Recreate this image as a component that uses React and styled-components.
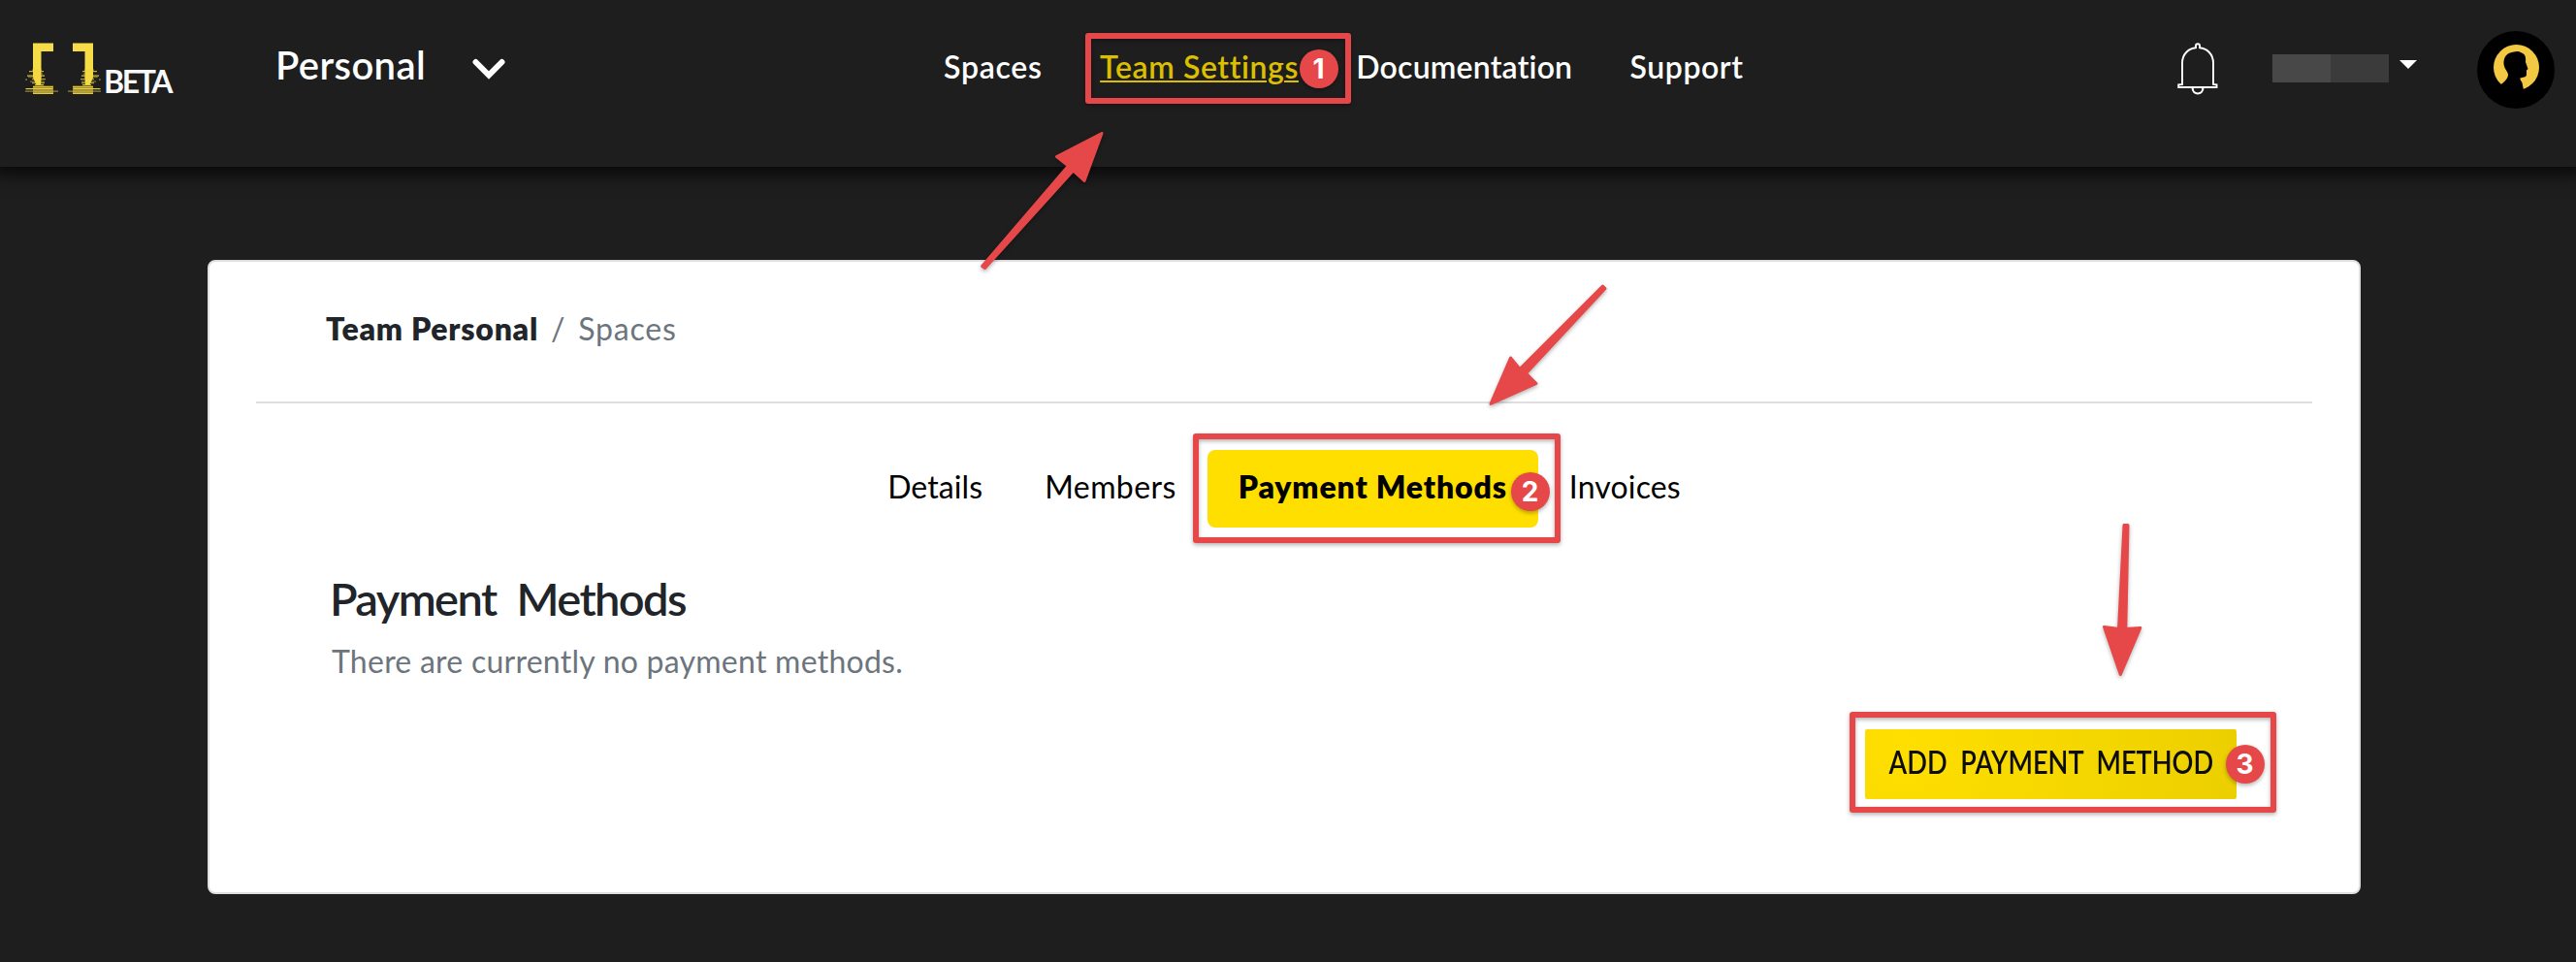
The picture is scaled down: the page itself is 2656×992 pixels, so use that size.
import React from 'react';
import styled, { createGlobalStyle, css } from 'styled-components';

const RED = '#e64849';

const GlobalStyle = createGlobalStyle`
  *, *::before, *::after { box-sizing: border-box; }
  body {
    margin: 0;
    background: #1e1e1e;
    font-family: Lato, "Liberation Sans", sans-serif;
    font-size: 32px;
    line-height: 40px;
    overflow: hidden;
  }
`;

const Page = styled.div`
  position: relative;
  width: 2656px;
  height: 992px;
  background: #1e1e1e;
  overflow: hidden;
`;

const Header = styled.header`
  display: grid;
  grid-template-columns: 284px 689px 1fr auto;
  align-items: start;
  height: 172px;
  padding-right: 22px;
  background: #1e1e1e;
  box-shadow: 0 0 16px 8px rgba(0, 0, 0, 0.7);
`;

const Brand = styled.div`
  display: flex;
  padding: 44px 0 0 24px;
`;

const BrandLabel = styled.span`
  margin: 20px 0 0 -3px;
  color: #f8f9fa;
  font-weight: 700;
  letter-spacing: -2.4px;
`;

const TeamPicker = styled.div`
  display: flex;
  align-items: center;
  gap: 47px;
  padding-top: 43px;
  color: #fff;
  font-size: 40px;
  font-weight: 600;
  line-height: 48px;
  letter-spacing: 0.4px;

  svg { margin-top: 8px; }
`;

const Nav = styled.nav`
  display: flex;
  gap: 59.3px;
  padding-top: 49px;
`;

const NavLink = styled.a`
  position: relative;
  color: ${(p) => (p.$active ? '#dbbf00' : '#fff')};
  font-weight: 600;
  white-space: nowrap;
  letter-spacing: ${(p) => p.$tracking}px;
`;

const Underlined = styled.span`
  text-decoration: underline;
  text-decoration-thickness: 2px;
  text-underline-offset: 2px;
  text-decoration-skip-ink: auto;
`;

const Account = styled.div`
  display: flex;
  align-items: flex-start;
`;

const Bell = styled.svg`
  margin: 44px 56px 0 0;
`;

const HiddenName = styled.div`
  width: 120px;
  height: 29px;
  margin-top: 56px;
  background: linear-gradient(90deg, #484848 50%, #3b3b3b 50%);
`;

const Caret = styled.div`
  margin: 62px 62px 0 11px;
  border: 9px solid transparent;
  border-top-color: #fff;
  border-bottom: 0;
`;

const Avatar = styled.svg`
  margin-top: 32px;
`;

const Card = styled.main`
  width: 2220px;
  height: 654px;
  margin: 96px 0 0 214px;
  padding: 49px 48px 48px;
  background: #fff;
  border: 2px solid #dfdfdf;
  border-radius: 8px;
`;

const Breadcrumb = styled.div`
  display: flex;
  gap: 13px;
  padding-left: 72px;
  color: #6c757d;
  letter-spacing: 0.8px;

  strong {
    color: #212529;
    font-weight: 800;
    letter-spacing: 0.75px;
  }
`;

const Divider = styled.hr`
  height: 2px;
  margin: 55px 0 48px;
  border: 0;
  background: #dfdfdf;
`;

const Tabs = styled.div`
  display: flex;
  justify-content: center;
`;

const Tab = styled.div`
  position: relative;
  height: 80px;
  padding: 18px 32px 22px;
  color: #000;
  border-radius: 8px;
  letter-spacing: ${(p) => p.$tracking}px;
  ${(p) => p.$active && css`
    background: #ffdf00;
    font-weight: 800;
  `}
`;

const Section = styled.section`
  display: flex;
  flex-direction: column;
  padding: 45px 78px 0 76px;
`;

const Title = styled.h2`
  margin: 0 0 17px;
  color: #212529;
  font-size: 47px;
  font-weight: 600;
  line-height: 56px;
  letter-spacing: -1.6px;
  word-spacing: 11px;
`;

const Note = styled.p`
  margin: 0 0 50px 2px;
  color: #6c757d;
  letter-spacing: 0.25px;
`;

const AddButton = styled.button`
  position: relative;
  display: flex;
  justify-content: center;
  align-self: flex-end;
  width: 383px;
  height: 72px;
  padding: 14px 0 0;
  border: 0;
  border-radius: 2px;
  background: radial-gradient(circle at 10% 20%, #ffdf00, #eccf00 100%);
  color: #0d0d0d;
  font: 600 32px/40px Lato, "Liberation Sans", sans-serif;
  white-space: nowrap;
`;

const ButtonLabel = styled.span`
  word-spacing: 8px;
  transform: scaleX(0.85);
`;

const Frame = styled.span`
  position: absolute;
  left: ${(p) => p.$x}px;
  top: ${(p) => p.$y}px;
  width: ${(p) => p.$w}px;
  height: ${(p) => p.$h}px;
  border: 6px solid ${RED};
  border-radius: 3px;
  filter: drop-shadow(0 2px 2px rgba(0, 0, 0, 0.3));
`;

const Badge = styled.span`
  position: absolute;
  left: ${(p) => p.$x}px;
  top: ${(p) => p.$y}px;
  width: 40px;
  height: 40px;
  border-radius: 50%;
  background: ${RED};
  box-shadow: 0 2px 4px rgba(0, 0, 0, 0.3);
  color: #fff;
  font: 700 28px/40px Inter, "Liberation Sans", sans-serif;
  letter-spacing: 0;
  text-align: center;
`;

const Arrows = styled.svg`
  position: absolute;
  inset: 0;
  pointer-events: none;
  filter: drop-shadow(0 2px 2px rgba(0, 0, 0, 0.3));
`;

/* Glitch streaks of the logo: x, y, width, opacity, for the left bracket. */
const STREAKS = [
  [9, 27.5, 10, 0.6], [6, 29, 15, 0.8], [10, 31.5, 10, 0.5], [4, 33.5, 18, 0.9],
  [5, 35, 14, 0.4], [9, 37, 14, 0.7], [7, 39.5, 15, 0.5], [9, 41, 13, 0.7],
  [12, 43, 9, 0.9], [10, 45, 21, 0.8], [2.5, 47, 28, 0.95], [2, 49.5, 34, 0.6],
  [10, 51.7, 21, 0.95],
];

function LogoHalf() {
  return (
    <g>
      <path d="M10 0.5H31V9H18.5V38L18 43.5H13.5L10 36Z" fill="#f6dc47" />
      <rect x="10" y="44.5" width="21" height="8.5" fill="#f0d43e" opacity="0.55" />
      {STREAKS.map(([x, y, w, o]) => (
        <rect key={y} x={x} y={y} width={w} height="1.2" fill="#f0d63c" opacity={o} />
      ))}
      <rect x="2.5" y="37.5" width="1.2" height="1.2" fill="#e8cf35" />
    </g>
  );
}

function Logo() {
  return (
    <svg width="86" height="54" viewBox="0 0 86 54">
      <LogoHalf />
      <g transform="translate(82 0) scale(-1 1)"><LogoHalf /></g>
    </svg>
  );
}

export default function App() {
  return (
    <>
      <GlobalStyle />
      <Page>
        <Header>
          <Brand>
            <Logo />
            <BrandLabel>BETA</BrandLabel>
          </Brand>
          <TeamPicker>
            Personal
            <svg width="36" height="24" viewBox="0 0 36 24">
              <path d="M4.5 5L18 18.5L31.5 5" fill="none" stroke="#fff" strokeWidth="6" strokeLinecap="round" />
            </svg>
          </TeamPicker>
          <Nav>
            <NavLink $tracking={0.75}>Spaces</NavLink>
            <NavLink $active $tracking={0.6}>
              <Underlined>Team Settings</Underlined>
              <Frame $x={-15} $y={-15} $w={274} $h={73} />
              <Badge $x={205.5} $y={1.5}>1</Badge>
            </NavLink>
            <NavLink $tracking={0.2}>Documentation</NavLink>
            <NavLink $tracking={0.55}>Support</NavLink>
          </Nav>
          <Account>
            <Bell width="42" height="54" viewBox="0 0 42 54">
              <g fill="none" stroke="#fff" strokeWidth="1.9">
                <path d="M5 43V21C5 11.5 12 5.7 19 5.2V3C19 0.6 23 0.6 23 3V5.2C30 5.7 37 11.5 37 21V43L40.5 43.3V46H1.2V43.3Z" />
                <path d="M15.6 46.5C15.6 54.5 26.4 54.5 26.4 46.5" strokeWidth="2.2" />
              </g>
            </Bell>
            <HiddenName />
            <Caret />
            <Avatar width="80" height="80" viewBox="0 0 80 80">
              <circle cx="40" cy="40" r="40" />
              <circle cx="40.5" cy="37.5" r="23.5" fill="#f3c843" />
              <path d="M22 57C28 53 32 49 32 45C32 42 28 39 27.5 34C27 27 31 22 38 21.5C41 20.3 44 21 46 22.5C50 24 50.5 28 50 32L52.5 39L51 40.5L51 45C50.5 48 47 47.5 44.5 48.5C44 51 47 52 47 56L48 61L54 68L40 72L20 66Z" />
            </Avatar>
          </Account>
        </Header>
        <Card>
          <Breadcrumb>
            <strong>Team Personal</strong>
            <span>/</span>
            <span>Spaces</span>
          </Breadcrumb>
          <Divider />
          <Tabs>
            <Tab $tracking={0.1}>Details</Tab>
            <Tab $tracking={0.4}>Members</Tab>
            <Tab $active $tracking={0.85}>
              Payment Methods
              <Frame $x={-15} $y={-17.5} $w={379.5} $h={113.5} />
              <Badge $x={313} $y={23}>2</Badge>
            </Tab>
            <Tab $tracking={0.15}>Invoices</Tab>
          </Tabs>
          <Section>
            <Title>Payment Methods</Title>
            <Note>There are currently no payment methods.</Note>
            <AddButton>
              <ButtonLabel>ADD PAYMENT METHOD</ButtonLabel>
              <Frame $x={-16} $y={-18} $w={440} $h={104} />
              <Badge $x={371.5} $y={16}>3</Badge>
            </AddButton>
          </Section>
        </Card>
        <Arrows width="2656" height="992" viewBox="0 0 2656 992">
          <g fill={RED} stroke={RED} strokeWidth="3" strokeLinejoin="round">
            <path d="M1136 137.5L1089.5 161.5L1101.5 171L1012.7 274.5L1015.5 276.5L1106.5 176L1118 186.5Z" />
            <path d="M1537 416.5L1557.5 369L1567 380.5L1652.5 295L1655 297.5L1573.5 385L1584 395.5Z" />
            <path d="M2186.3 695.5L2169.5 646.5L2184.5 648.5L2190 541.5H2194L2191.8 648.5L2206.8 647.5Z" />
          </g>
        </Arrows>
      </Page>
    </>
  );
}
